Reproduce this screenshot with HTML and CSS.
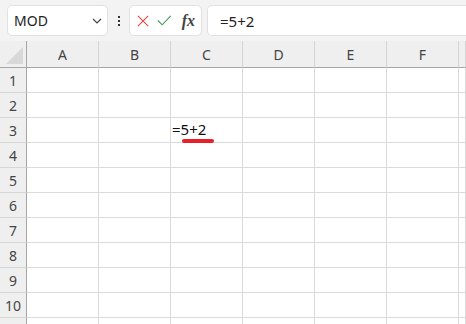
FILE: index.html
```html
<!DOCTYPE html>
<html lang="ja">
<head>
  <meta charset="UTF-8" />
  <title>Sheet</title>
  <link rel="stylesheet" href="styles.css">
</head>
<body>
  <div class="toolbar">
    <div class="name-box">
      <span>MOD</span>
      <svg class="chevron" width="10" height="6" viewBox="0 0 10 6"><path d="M1 1l4 4 4-4" fill="none" stroke="#444" stroke-width="1.2"/></svg>
    </div>
    <div class="dots"><i></i><i></i><i></i></div>
    <div class="fx-box">
      <svg width="14" height="14" viewBox="0 0 14 14"><path d="M1 1l12 12M13 1L1 13" stroke="#e0474c" stroke-width="1.3"/></svg>
      <svg width="17" height="13" viewBox="0 0 17 13"><path d="M1 6.5l5 5L16 1" fill="none" stroke="#3f9e55" stroke-width="1.3"/></svg>
      <span class="fx">fx</span>
    </div>
    <div class="formula">=5+2</div>
  </div>

  <div class="sheet">
    <div class="grid">
      <div class="corner"><span class="tri"></span></div>
      <div class="col-head">A</div>
      <div class="col-head">B</div>
      <div class="col-head">C</div>
      <div class="col-head">D</div>
      <div class="col-head">E</div>
      <div class="col-head">F</div>
      <div class="col-head"></div>
    </div>
    <div class="grid" id="rows"></div>
  </div>

  <script>
    const rows = document.getElementById('rows');
    // 10 visible rows, plus the top of row 11 peeking in at the bottom
    for (let r = 1; r <= 11; r++) {
      let html = `<div class="row-head">${r <= 10 ? r : ''}</div>`;
      for (let c = 0; c < 7; c++) {
        if (r === 3 && c === 2) {
          html += '<div class="cell editing">=5+2<span class="mark"></span></div>';
        } else {
          html += '<div class="cell"></div>';
        }
      }
      rows.insertAdjacentHTML('beforeend', html);
    }
  </script>
</body>
</html>
```

FILE: styles.css
```css
html,
body {
  height: 100%;
}
body {
  margin: 0;
  background: #f3f3f3;
  font-family: "Segoe UI", "Noto Sans", "Noto Sans CJK JP", sans-serif;
  color: #333;
  overflow: hidden;
}
.toolbar {
  height: 41px;
  box-sizing: border-box;
  padding: 5px 0 0 7px;
  display: flex;
  align-items: flex-start;
}
.name-box,
.fx-box,
.formula {
  height: 31px;
  box-sizing: border-box;
  background: #fff;
  border: 1px solid #e1e1e1;
  border-radius: 5px;
  display: flex;
  align-items: center;
}
.name-box {
  width: 101px;
  padding: 0 5px 0 6px;
  justify-content: space-between;
  font-size: 14px;
  color: #222;
}
.chevron {
  margin-top: 1px;
}
.dots {
  width: 21px;
  height: 31px;
  display: flex;
  flex-direction: column;
  align-items: center;
  justify-content: center;
  gap: 2px;
}
.dots i {
  width: 2px;
  height: 2px;
  background: #333;
}
.fx-box {
  width: 73px;
  padding: 0 6px 0 7px;
  gap: 8px;
}
.fx {
  font-family: "Liberation Serif", "DejaVu Serif", serif;
  font-style: italic;
  font-weight: bold;
  font-size: 16px;
  color: #444;
  margin-left: 2px;
}
.formula {
  margin-left: 5px;
  flex: 1;
  border-right: none;
  border-radius: 5px 0 0 5px;
  padding-left: 12px;
  font-size: 15px;
  color: #222;
}
.sheet {
  height: calc(100% - 41px);
  overflow: hidden;
}
.grid {
  display: grid;
  grid-template-columns: 27px repeat(6, 72px) 1fr;
  background: #fff;
}
.corner,
.col-head {
  height: 27px;
  box-sizing: border-box;
  background: #efefef;
  border-bottom: 1px solid #a6a6a6;
}
.corner {
  position: relative;
  border-right: 1px solid #a6a6a6;
}
.tri {
  position: absolute;
  right: 3px;
  bottom: 3px;
  width: 0;
  height: 0;
  border-left: 17px solid transparent;
  border-bottom: 17px solid #d8d8d8;
}
.col-head {
  border-right: 1px solid #d6d6d6;
  display: flex;
  align-items: flex-end;
  justify-content: center;
  padding-bottom: 3px;
  font-size: 14px;
  color: #444;
}
.row-head {
  height: 25px;
  box-sizing: border-box;
  background: #efefef;
  border-right: 1px solid #a6a6a6;
  border-bottom: 1px solid #d6d6d6;
  display: flex;
  align-items: center;
  justify-content: center;
  font-size: 14px;
  color: #444;
}
.cell {
  height: 25px;
  box-sizing: border-box;
  border-right: 1px solid #dadada;
  border-bottom: 1px solid #dadada;
}
.editing {
  position: relative;
  font-size: 15px;
  color: #111;
  padding-left: 1px;
  line-height: 23px;
}
.mark {
  position: absolute;
  left: 11px;
  top: 21px;
  width: 32px;
  height: 4px;
  border-radius: 2px;
  background: #e8202a;
}
```
